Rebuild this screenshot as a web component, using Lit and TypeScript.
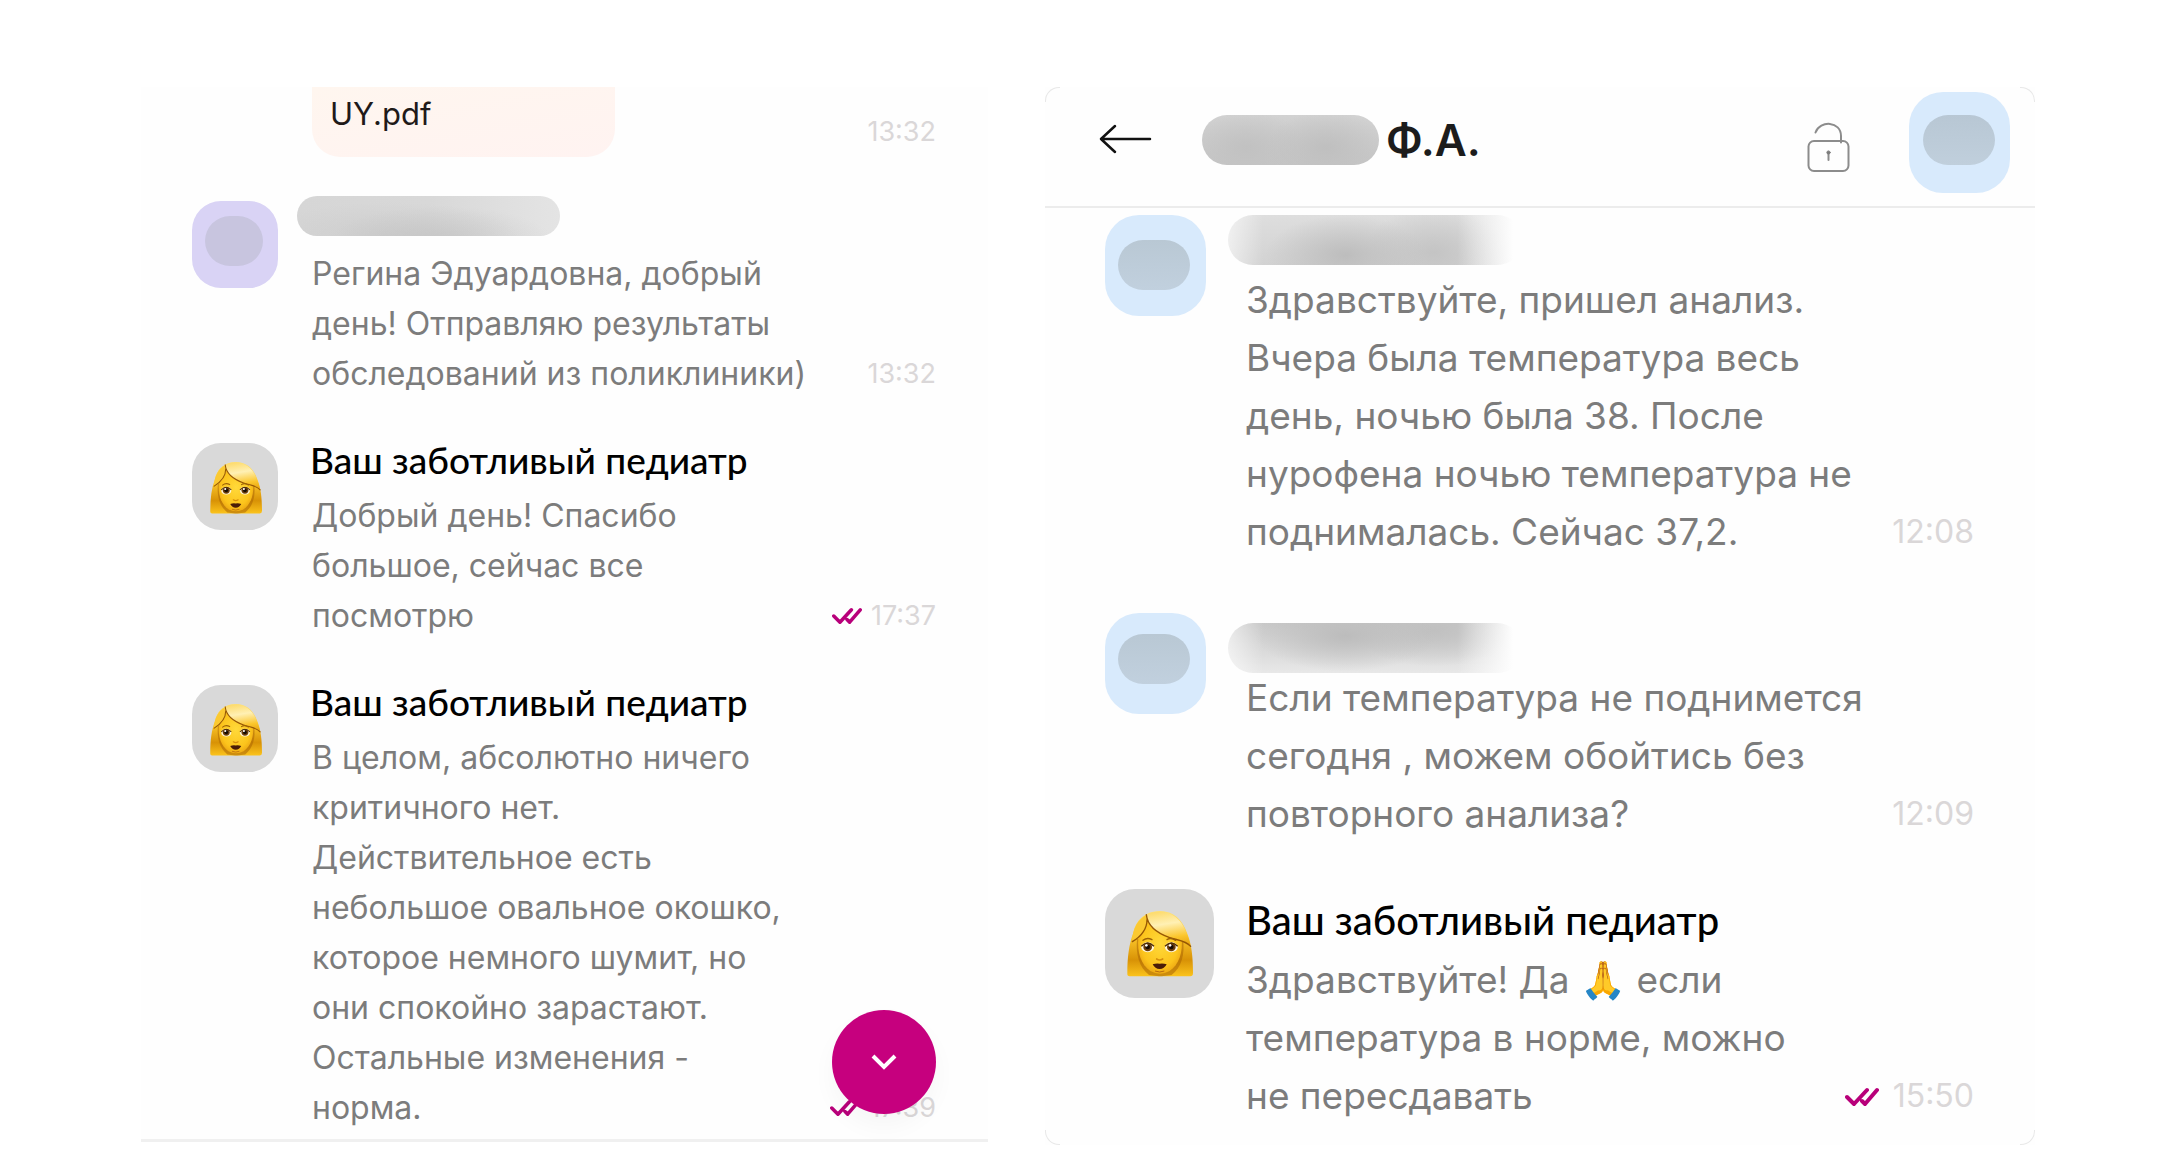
import { LitElement, html, css, nothing } from "lit";
import { customElement, property } from "lit/decorators.js";
import { classMap } from "lit/directives/class-map.js";

interface Message {
  author?: string;
  avatar: "lilac" | "blue" | "doctor";
  lowered?: boolean;
  text: string;
  time: string;
  read?: boolean;
}

const DOCTOR = "Ваш заботливый педиатр";

const LEFT: Message[] = [
  {
    avatar: "lilac",
    text: "Регина Эдуардовна, добрый\nдень! Отправляю результаты\nобследований из поликлиники)",
    time: "13:32",
  },
  {
    author: DOCTOR,
    avatar: "doctor",
    text: "Добрый день! Спасибо\nбольшое, сейчас все\nпосмотрю",
    time: "17:37",
    read: true,
  },
  {
    author: DOCTOR,
    avatar: "doctor",
    text: "В целом, абсолютно ничего\nкритичного нет.\nДействительное есть\nнебольшое овальное окошко,\nкоторое немного шумит, но\nони спокойно зарастают.\nОстальные изменения -\nнорма.",
    time: "17:39",
    read: true,
  },
];

const RIGHT: Message[] = [
  {
    avatar: "blue",
    text: "Здравствуйте, пришел анализ.\nВчера была температура весь\nдень, ночью была 38. После\nнурофена ночью температура не\nподнималась. Сейчас 37,2.",
    time: "12:08",
  },
  {
    avatar: "blue",
    lowered: true,
    text: "Если температура не поднимется\nсегодня , можем обойтись без\nповторного анализа?",
    time: "12:09",
  },
  {
    author: DOCTOR,
    avatar: "doctor",
    text: "Здравствуйте! Да 🙏 если\nтемпература в норме, можно\nне пересдавать",
    time: "15:50",
    read: true,
  },
];

const woman = html`
  <svg class="woman" viewBox="0 0 198 198" aria-hidden="true">
    <defs>
      <linearGradient id="hair" x1="0" y1="0" x2="0" y2="1">
        <stop offset="0" stop-color="#ffe27a" />
        <stop offset="0.4" stop-color="#fbc62a" />
        <stop offset="0.75" stop-color="#d89206" />
        <stop offset="1" stop-color="#fbc31c" />
      </linearGradient>
      <radialGradient id="face" cx="0.5" cy="0.45" r="0.6">
        <stop offset="0" stop-color="#ffd93a" />
        <stop offset="0.7" stop-color="#fcc41c" />
        <stop offset="1" stop-color="#e9a010" />
      </radialGradient>
      <linearGradient id="fringe" x1="0.4" y1="0" x2="0.6" y2="1">
        <stop offset="0" stop-color="#fddc70" />
        <stop offset="0.35" stop-color="#fff0b4" />
        <stop offset="0.75" stop-color="#fbc62c" />
        <stop offset="1" stop-color="#e8a714" />
      </linearGradient>
    </defs>
    <path fill="url(#hair)" d="M8 196Q0 196 1 186C1 140 6 100 18 68C26 26 56 0 98 0C140 0 166 26 180 66C194 98 198 140 198 186Q198 196 190 196Z" />
    <path fill="#a96404" opacity=".55" d="M30 84C26 130 36 168 66 192L96 196H104L134 192C164 168 174 130 168 84Z" />
    <path fill="url(#face)" d="M34 80C30 124 42 160 70 180Q99 196 128 180C156 160 168 124 164 80C140 50 80 24 60 24Z" />
    <path fill="#fbc931" d="M58 12C34 24 18 50 14 92C34 84 56 62 62 36Z" />
    <path fill="url(#fringe)" d="M58 11C110 -14 160 12 178 64C184 80 188 92 191 106C176 88 152 88 128 80C92 68 60 46 58 11Z" />
    <path fill="none" stroke="#965704" stroke-width="4" stroke-linecap="round" d="M58 11C62 48 94 68 128 80C152 88 176 88 191 106M60 26C60 54 42 76 16 92" />
    <path fill="none" stroke="#9d6206" stroke-width="4" stroke-linecap="round" d="M48 88Q60 78 75 86M120 86Q132 78 146 88" />
    <ellipse cx="62" cy="109" rx="19" ry="15" fill="#fff6dd" />
    <ellipse cx="133" cy="109" rx="19" ry="15" fill="#fff6dd" />
    <circle cx="62" cy="108" r="13" fill="#6b3d0c" />
    <circle cx="133" cy="108" r="13" fill="#6b3d0c" />
    <circle cx="62" cy="108" r="7" fill="#170b02" />
    <circle cx="133" cy="108" r="7" fill="#170b02" />
    <circle cx="58" cy="103" r="4" fill="#fff" />
    <circle cx="129" cy="103" r="4" fill="#fff" />
    <path fill="none" stroke="#4d2c05" stroke-width="4" d="M43 106Q62 86 81 106M114 106Q133 86 152 106" />
    <path fill="none" stroke="#d58f0c" stroke-width="5" stroke-linecap="round" d="M89 144Q98 150 107 144" />
    <path fill="#4a1d08" d="M77 160Q88 156 98 158Q108 156 119 160Q112 174 98 174Q84 174 77 160Z" />
    <path fill="none" stroke="#b66a10" stroke-width="3" d="M84 180Q98 186 112 180" />
  </svg>
`;

@customElement("chat-message")
class ChatMessage extends LitElement {
  @property({ attribute: false }) message!: Message;
  @property({ type: Boolean, reflect: true }) large = false;

  static styles = css`
    :host {
      display: grid;
      grid-template-columns: 120px 1fr auto;
      --line: 50px;
    }
    :host([large]) {
      grid-template-columns: 141px 1fr auto;
      --line: 58px;
    }
    .avatar {
      box-sizing: border-box;
      width: 86px;
      height: 87px;
      border-radius: 29px;
      padding: 15px 0 0 13px;
    }
    .large.avatar {
      width: 101px;
      height: 101px;
      border-radius: 34px;
      padding: 25px 0 0 13px;
    }
    .large.avatar.lowered {
      padding-top: 21px;
    }
    .avatar.lilac {
      background: #d9d3f5;
    }
    .avatar.blue {
      background: #d8eafc;
    }
    .avatar.doctor {
      background: #d9d9d9;
      padding: 19px 0 0 18px;
    }
    .large.avatar.doctor {
      width: 109px;
      height: 109px;
      border-radius: 30px;
      margin-top: -6px;
      padding: 22px 0 0 22px;
    }
    .blob {
      width: 58px;
      height: 50px;
      border-radius: 25px;
      background: #c8c5df;
    }
    .large .blob {
      width: 72px;
      background: linear-gradient(#b9c8d4, #c1d0de);
    }
    .woman {
      display: block;
      width: 52px;
      height: 52px;
    }
    .large .woman {
      width: 66px;
      height: 66px;
    }
    .author {
      margin: 0 0 14px -2px;
      font: 500 37px/34px Lato, sans-serif;
      color: #000;
      white-space: nowrap;
    }
    .large .author {
      margin: 0 0 5px;
      font-size: 40px;
      line-height: 51px;
    }
    .hidden-name {
      width: 263px;
      height: 40px;
      margin: -5px 0 13px -15px;
      border-radius: 20px;
      background:
        radial-gradient(ellipse 110px 34px at 55% 110%, #bebebe88, #c0c0c000),
        radial-gradient(ellipse 130px 34px at 35% 100%, #c4c4c488, #c4c4c400),
        linear-gradient(90deg, #d6d6d6, #d8d8d8 50%, #e4e4e4);
    }
    .large .hidden-name {
      width: 294px;
      height: 50px;
      margin: 0 0 6px -18px;
      border-radius: 25px;
      background:
        linear-gradient(90deg, #fff9, #fff0 12%, #fff0 78%, #fefefe 97%),
        radial-gradient(ellipse 80px 40px at 40% 80%, #bdbdbd, #bdbdbd00),
        radial-gradient(ellipse 70px 45px at 70% 75%, #c4c4c4, #c4c4c400),
        linear-gradient(#dedede, #d2d2d2);
    }
    .large .lowered .hidden-name {
      margin: 10px 0 -4px -18px;
      background:
        linear-gradient(90deg, #fff9, #fff0 12%, #fff0 78%, #fefefe 97%),
        radial-gradient(ellipse 90px 36px at 40% 25%, #bcbcbc, #bcbcbc00),
        radial-gradient(ellipse 80px 36px at 70% 15%, #c0c0c0, #c0c0c000),
        linear-gradient(#c8c8c8, #e8e8e8);
    }
    .text {
      margin: 0;
      font: 400 32px/50px Inter, sans-serif;
      color: #7c7c7c;
      white-space: pre;
    }
    .large .text {
      font-size: 37px;
      line-height: 58px;
    }
    .meta {
      align-self: end;
      display: flex;
      align-items: center;
      gap: 9px;
      height: var(--line);
      font: 400 27px/50px Inter, sans-serif;
      color: #dad7d8;
    }
    .meta.large {
      gap: 14px;
      font-size: 32px;
      line-height: 58px;
    }
    .ticks {
      width: 30px;
      height: 18px;
    }
    .large .ticks {
      width: 34px;
      height: 20px;
      margin-top: 2px;
    }
  `;

  render() {
    const m = this.message;
    const mods = { large: this.large, lowered: !!m.lowered };
    return html`
      <div class=${classMap({ avatar: true, [m.avatar]: true, ...mods })}>
        ${m.avatar === "doctor" ? woman : html`<div class="blob"></div>`}
      </div>
      <div class=${classMap({ large: this.large })}>
        <div class=${classMap({ lowered: !!m.lowered })}>
          ${m.author
            ? html`<h2 class="author">${m.author}</h2>`
            : html`<div class="hidden-name"></div>`}
          <p class="text">${m.text}</p>
        </div>
      </div>
      <div class=${classMap({ meta: true, large: this.large })}>
        ${m.read
          ? html`<svg class="ticks" viewBox="0 0 34 20" aria-hidden="true">
              <path d="M2 10L9 17L22 3M17 14L20 17L32 3" fill="none" stroke="#b8007a" stroke-width="4" stroke-linecap="round" stroke-linejoin="round" />
            </svg>`
          : nothing}
        <time>${m.time}</time>
      </div>
    `;
  }
}

@customElement("app-root")
class AppRoot extends LitElement {
  static styles = css`
    :host {
      display: grid;
      grid-template-columns: 847fr 990fr;
      align-items: start;
      gap: 57px;
      box-sizing: border-box;
      min-height: 100vh;
      padding: 87px 129px 29px 141px;
      background: #fff;
      font-family: Inter, sans-serif;
    }
    .chat {
      position: relative;
      background: #fefefe;
    }
    .left {
      border-bottom: 3px solid #f0f0f0;
    }
    .feed {
      display: flex;
      flex-direction: column;
      gap: 44px;
      padding: 0 52px 6px 51px;
    }
    .right .feed {
      gap: 52px;
      padding: 7px 61px 20px 60px;
    }
    .attachment {
      display: flex;
      justify-content: space-between;
      align-items: flex-end;
      padding-left: 120px;
      font: 400 27px/50px Inter, sans-serif;
      color: #dad7d8;
    }
    .file {
      box-sizing: border-box;
      width: 303px;
      padding: 2px 20px 18px 18px;
      border-radius: 0 0 28px 28px;
      background: linear-gradient(170deg, #fff6ef, #fff3f1);
      font-size: 31px;
      color: #1f1a19;
      text-decoration: none;
    }
    button {
      display: block;
      padding: 0;
      border: 0;
      background: none;
      cursor: pointer;
    }
    svg {
      display: block;
    }
    .down {
      position: absolute;
      right: 52px;
      bottom: 25px;
      display: grid;
      place-items: center;
      width: 104px;
      height: 104px;
      border-radius: 50%;
      background: #c6007e;
      box-shadow: 0 12px 24px #00000009;
    }
    .header {
      display: flex;
      align-items: center;
      padding: 5px 25px 13px 54px;
      border-bottom: 2px solid #ececec;
    }
    .back {
      margin-right: 50px;
      padding-bottom: 7px;
    }
    .person {
      display: flex;
      align-items: center;
      gap: 7px;
      flex: 1;
      margin: 0;
      padding-bottom: 5px;
      font: 600 44px/50px Inter, sans-serif;
      color: #1c1c1c;
    }
    .surname {
      width: 177px;
      height: 50px;
      border-radius: 25px;
      background:
        radial-gradient(ellipse 60px 36px at 70% 65%, #bfbfbf, #bfbfbf00),
        radial-gradient(ellipse 60px 36px at 25% 65%, #c1c1c1, #c1c1c100),
        linear-gradient(#d2d2d2, #c6c6c6);
    }
    .lock {
      margin-right: 59px;
      padding-top: 10px;
    }
    .profile {
      box-sizing: border-box;
      width: 101px;
      height: 101px;
      padding: 23px 0 0 14px;
      border-radius: 34px;
      background: #d8eafc;
    }
    .profile-blob {
      width: 72px;
      height: 50px;
      border-radius: 25px;
      background: linear-gradient(#b8c7d4, #c0cfdc);
    }
    .corner {
      position: absolute;
      width: 14px;
      height: 14px;
      border: 0 solid #e8e8e8;
    }
    .tl { top: 0; left: 0; border-width: 1px 0 0 1px; border-top-left-radius: 14px; }
    .tr { top: 0; right: 0; border-width: 1px 1px 0 0; border-top-right-radius: 14px; }
    .bl { bottom: 0; left: 0; border-width: 0 0 1px 1px; border-bottom-left-radius: 14px; }
    .br { bottom: 0; right: 0; border-width: 0 1px 1px 0; border-bottom-right-radius: 14px; }
  `;

  render() {
    return html`
      <section class="chat left">
        <div class="feed">
          <div class="attachment">
            <a class="file" href="#">UY.pdf</a>
            <time>13:32</time>
          </div>
          ${LEFT.map((m) => html`<chat-message .message=${m}></chat-message>`)}
        </div>
        <button class="down" aria-label="Вниз">
          <svg width="28" height="18" viewBox="0 0 28 18">
            <path d="M3 3L14 14L25 3" fill="none" stroke="#fff" stroke-width="4" />
          </svg>
        </button>
      </section>
      <section class="chat right">
        <header class="header">
          <button class="back" aria-label="Назад">
            <svg width="53" height="30" viewBox="0 0 53 30">
              <path d="M51 15H2M16 2L2 15L16 28" fill="none" stroke="#111" stroke-width="2.500" stroke-linecap="round" stroke-linejoin="round" />
            </svg>
          </button>
          <h1 class="person"><span class="surname"></span>Ф.А.</h1>
          <button class="lock" aria-label="Доступ">
            <svg width="43" height="51" viewBox="0 0 43 51" fill="none" stroke="#8c8c8c" stroke-width="2" stroke-linecap="round">
              <rect x="1.500" y="19" width="40" height="30" rx="5.500" />
              <path d="M8.500 10.500C13-2 34-1 34 14V20.500" />
              <path d="M21.500 31V38" stroke-width="2" />
              <circle cx="21.500" cy="30.500" r="1.600" fill="#7c7c7c" stroke="#7c7c7c" stroke-width="1" />
            </svg>
          </button>
          <div class="profile"><div class="profile-blob"></div></div>
        </header>
        <div class="feed">
          ${RIGHT.map((m) => html`<chat-message large .message=${m}></chat-message>`)}
        </div>
        <span class="corner tl"></span>
        <span class="corner tr"></span>
        <span class="corner bl"></span>
        <span class="corner br"></span>
      </section>
    `;
  }
}
